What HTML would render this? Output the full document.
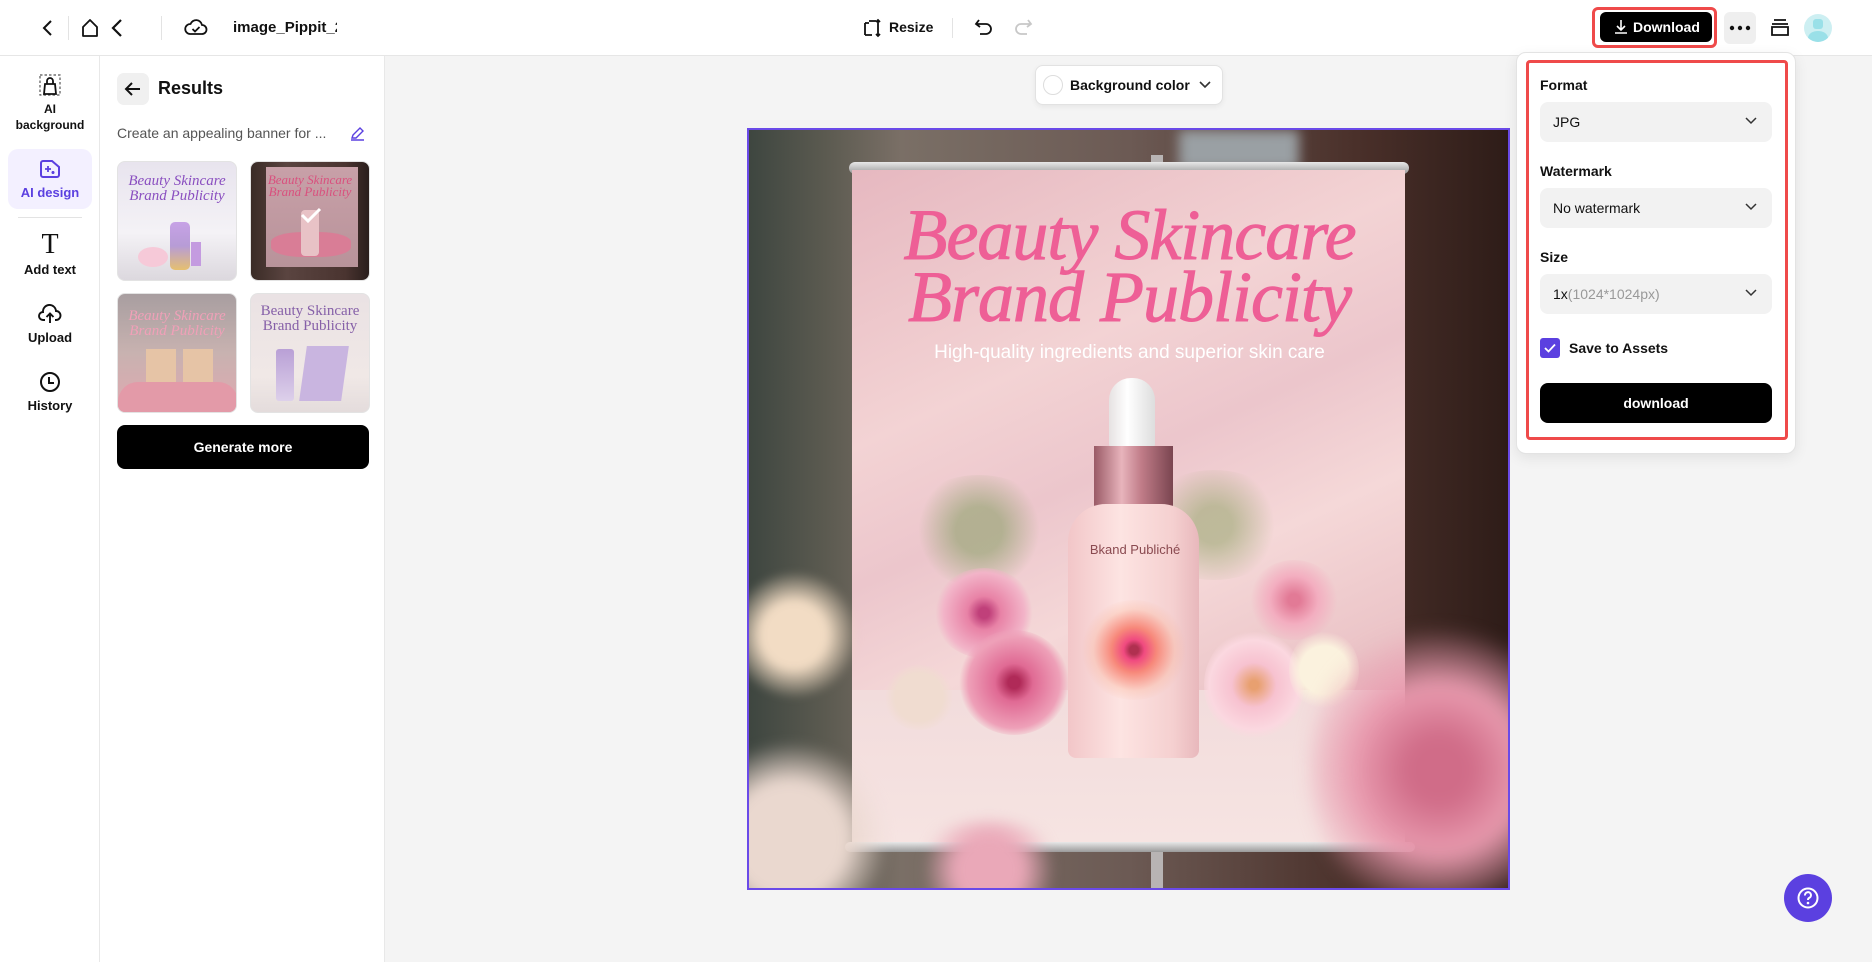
<!DOCTYPE html>
<html><head><meta charset="utf-8"><style>
*{box-sizing:border-box;margin:0;padding:0}
body{width:1872px;height:962px;overflow:hidden;background:#f4f4f4;font-family:"Liberation Sans",Arial,sans-serif;color:#111;position:relative}
.abs{position:absolute}
.top{left:0;top:0;width:1872px;height:56px;background:#fff;border-bottom:1px solid #e6e6e6}
.nav{left:0;top:56px;width:100px;height:906px;background:#fff;border-right:1px solid #e8e8e8}
.panel{left:100px;top:56px;width:285px;height:906px;background:#fff;border-right:1px solid #e8e8e8}
.navlbl{position:absolute;left:0;width:100px;text-align:center;font-size:12px;font-weight:bold;line-height:16px}
.thumb{position:absolute;width:120px;height:120px;border-radius:8px;overflow:hidden;border:1px solid #e3e3e3}
.thumb .t{position:absolute;left:0;width:100%;text-align:center;font-family:"Liberation Serif",serif;font-style:italic;font-size:15px;line-height:15px}
.sel{position:absolute;left:1540px;width:232px;height:40px;background:#f2f2f2;border-radius:8px;font-size:14px;padding-left:13px;line-height:40px}
.sel svg{position:absolute;right:14px;top:14px}
.lbl{position:absolute;left:1540px;font-size:14px;font-weight:bold}
</style></head><body>
<div class="abs top"></div>
<svg class="abs" style="left:40px;top:18px" width="16" height="20" viewBox="0 0 16 20"><path d="M11 3 L4 10 L11 17" fill="none" stroke="#111" stroke-width="2"/></svg>
<div class="abs" style="left:68px;top:16px;width:1px;height:24px;background:#e3e3e3"></div>
<svg class="abs" style="left:81px;top:18px" width="18" height="20" viewBox="0 0 18 20"><path d="M2 9 L9 2 L16 9 V18 H2 Z" fill="none" stroke="#111" stroke-width="1.8" stroke-linejoin="round"/></svg>
<svg class="abs" style="left:109px;top:17px" width="16" height="22" viewBox="0 0 16 22"><path d="M12 3 L4 11 L12 19" fill="none" stroke="#111" stroke-width="2.2"/></svg>
<div class="abs" style="left:161px;top:16px;width:1px;height:24px;background:#e3e3e3"></div>
<svg class="abs" style="left:184px;top:16px" width="24" height="22" viewBox="0 0 24 22"><path d="M6 18 H18 A4.5 4.5 0 0 0 18 9 A6 6 0 0 0 6.5 8 A5 5 0 0 0 6 18 Z" fill="none" stroke="#111" stroke-width="1.8"/><path d="M8.5 13 L11 15.5 L15.5 11" fill="none" stroke="#111" stroke-width="1.8"/></svg>
<div class="abs" style="left:233px;top:19px;width:104px;overflow:hidden;white-space:nowrap;font-size:15px;font-weight:bold">image_Pippit_2025</div>
<svg class="abs" style="left:863px;top:18px" width="20" height="20" viewBox="0 0 20 20"><path d="M2 17 V5 M2 17 H9 M2 5 H6 M15 2 V18 M13 4 L15 2 L17 4 M13 16 L15 18 L17 16 M6 3 H13" fill="none" stroke="#111" stroke-width="1.8"/></svg>
<div class="abs" style="left:889px;top:19px;font-size:14px;font-weight:bold">Resize</div>
<div class="abs" style="left:952px;top:18px;width:1px;height:20px;background:#e3e3e3"></div>
<svg class="abs" style="left:974px;top:17px" width="20" height="20" viewBox="0 0 20 20"><path d="M5 3 L2 7 L6 10 M2 7 H12 A5 5 0 0 1 12 17 H6" fill="none" stroke="#111" stroke-width="1.8"/></svg>
<svg class="abs" style="left:1013px;top:17px" width="20" height="20" viewBox="0 0 20 20"><path d="M15 3 L18 7 L14 10 M18 7 H8 A5 5 0 0 0 8 17 H14" fill="none" stroke="#c8c8c8" stroke-width="1.8"/></svg>
<div class="abs" style="left:1592px;top:7px;width:125px;height:41px;border:3px solid #ef4a4a;border-radius:6px"></div>
<div class="abs" style="left:1600px;top:12px;width:112px;height:30px;background:#000;border-radius:6px;color:#fff;font-size:14px;font-weight:bold;line-height:30px;padding-left:33px">Download</div>
<svg class="abs" style="left:1614px;top:19px" width="14" height="16" viewBox="0 0 14 16"><path d="M7 1 V11 M3 7 L7 11 L11 7 M1 14 H13" fill="none" stroke="#fff" stroke-width="1.6"/></svg>
<div class="abs" style="left:1724px;top:12px;width:32px;height:32px;background:#efefef;border-radius:6px"></div>
<svg class="abs" style="left:1729px;top:25px" width="22" height="6"><circle cx="3" cy="3" r="2.2" fill="#111"/><circle cx="11" cy="3" r="2.2" fill="#111"/><circle cx="19" cy="3" r="2.2" fill="#111"/></svg>
<svg class="abs" style="left:1770px;top:18px" width="20" height="20" viewBox="0 0 20 20"><path d="M4 2 H16 M2 6 H18 M2 9 H18 V17 H2 Z" fill="none" stroke="#111" stroke-width="1.8"/></svg>
<div class="abs" style="left:1804px;top:14px;width:28px;height:28px;border-radius:50%;background:#cdeff2;overflow:hidden"><div style="position:absolute;left:9px;top:5px;width:10px;height:10px;border-radius:3px;background:#9ae0e8"></div><div style="position:absolute;left:4px;top:17px;width:20px;height:14px;border-radius:50%;background:#9ae0e8"></div></div>

<div class="abs nav"></div>
<svg class="abs" style="left:39px;top:74px" width="22" height="22" viewBox="0 0 22 22"><rect x="1" y="1" width="20" height="20" fill="none" stroke="#555" stroke-width="1.2" stroke-dasharray="2.5 2"/><path d="M5 20 L6 10 H16 L17 20 Z M8 10 V7 A3 3 0 0 1 14 7 V10" fill="none" stroke="#111" stroke-width="1.8"/></svg>
<div class="navlbl" style="top:101px">AI<br>background</div>
<div class="abs" style="left:8px;top:149px;width:84px;height:60px;background:#f3f0ff;border-radius:10px"></div>
<svg class="abs" style="left:39px;top:159px" width="22" height="20" viewBox="0 0 22 20"><path d="M2 4 A2 2 0 0 1 4 2 H13 L20 8 V16 A2 2 0 0 1 18 18 H4 A2 2 0 0 1 2 16 Z" fill="none" stroke="#5b40e0" stroke-width="2"/><path d="M9 7 V13 M6 10 H12 M14 12 V15 M12.5 13.5 H15.5" stroke="#5b40e0" stroke-width="1.8"/></svg>
<div class="navlbl" style="top:185px;color:#5b40e0;font-size:13px">AI design</div>
<div class="abs" style="left:18px;top:217px;width:64px;height:1px;background:#e3e3e3"></div>
<div class="abs" style="left:0;top:230px;width:100px;text-align:center;font-family:'Liberation Serif',serif;font-size:28px;line-height:30px">T</div>
<div class="navlbl" style="top:262px;font-size:13px">Add text</div>
<svg class="abs" style="left:38px;top:303px" width="24" height="22" viewBox="0 0 24 22"><path d="M7 17 H5 A4 4 0 0 1 5 9 A6.5 6.5 0 0 1 18 8 A4.5 4.5 0 0 1 18 17 H17" fill="none" stroke="#111" stroke-width="1.9"/><path d="M12 20 V11 M8.5 14 L12 10.5 L15.5 14" fill="none" stroke="#111" stroke-width="1.9"/></svg>
<div class="navlbl" style="top:330px;font-size:13px">Upload</div>
<svg class="abs" style="left:39px;top:371px" width="22" height="22" viewBox="0 0 22 22"><circle cx="11" cy="11" r="9" fill="none" stroke="#111" stroke-width="2"/><path d="M10 6 V12 H15" fill="none" stroke="#111" stroke-width="2"/></svg>
<div class="navlbl" style="top:398px;font-size:13px">History</div>

<div class="abs panel"></div>
<div class="abs" style="left:117px;top:73px;width:32px;height:32px;background:#f0f0f0;border-radius:7px"></div>
<svg class="abs" style="left:124px;top:80px" width="18" height="18" viewBox="0 0 18 18"><path d="M16 9 H3 M8 3 L2 9 L8 15" fill="none" stroke="#111" stroke-width="2"/></svg>
<div class="abs" style="left:158px;top:78px;font-size:18px;font-weight:bold">Results</div>
<div class="abs" style="left:117px;top:125px;font-size:14px;color:#555">Create an appealing banner for ...</div>
<svg class="abs" style="left:350px;top:126px" width="15" height="15" viewBox="0 0 15 15"><path d="M2 12 L3 9 L10 2 L13 5 L6 12 Z M1 14 H14" fill="none" stroke="#5b40e0" stroke-width="1.4"/></svg>

<div class="thumb" style="left:117px;top:161px;background:linear-gradient(#e8e4ee,#f4f2f6 60%,#dcd8de)">
<div class="t" style="top:12px;color:#8a4fc0">Beauty Skincare<br>Brand Publicity</div>
<div style="position:absolute;left:52px;top:60px;width:20px;height:48px;border-radius:5px;background:linear-gradient(#c7a2e6,#b79cd6 50%,#e6c070)"></div>
<div style="position:absolute;left:20px;top:85px;width:30px;height:20px;border-radius:50%;background:#f6c9d8"></div>
<div style="position:absolute;left:73px;top:80px;width:10px;height:24px;background:#c49be0"></div></div>
<div class="thumb" style="left:250px;top:161px;background:linear-gradient(90deg,#3a2b26,#5a4440 30%,#4a3430 80%,#2a1e1c)">
<div style="position:absolute;left:15px;top:5px;width:92px;height:100px;background:linear-gradient(#c8a0a8,#b8939a)"></div>
<div class="t" style="top:12px;color:#d9507e;font-size:13px;line-height:12px">Beauty Skincare<br>Brand Publicity</div>
<div style="position:absolute;left:20px;top:70px;width:80px;height:25px;border-radius:40%;background:#d97d96"></div>
<div style="position:absolute;left:50px;top:48px;width:18px;height:46px;background:#e8c2c6;border-radius:4px"></div>
<svg style="position:absolute;left:48px;top:44px" width="24" height="18"><path d="M3 9 L9 15 L21 3" fill="none" stroke="#fff" stroke-width="3"/></svg></div>
<div class="thumb" style="left:117px;top:293px;background:linear-gradient(#a89ea0,#c8b2b0 50%,#e0a8b0)">
<div class="t" style="top:15px;color:#f0a0b8">Beauty Skincare<br>Brand Publicity</div>
<div style="position:absolute;left:28px;top:55px;width:30px;height:45px;background:#e6c4a6"></div>
<div style="position:absolute;left:65px;top:55px;width:30px;height:45px;background:#e6c4a6"></div>
<div style="position:absolute;left:0;top:88px;width:120px;height:32px;background:#e39aa8;border-radius:20px 20px 0 0"></div></div>
<div class="thumb" style="left:250px;top:293px;background:linear-gradient(#eae2e4,#f0e8e6 70%,#e4dcdc)">
<div class="t" style="top:10px;color:#8660a8;font-style:normal">Beauty Skincare<br>Brand Publicity</div>
<div style="position:absolute;left:25px;top:55px;width:18px;height:52px;border-radius:3px;background:linear-gradient(#b9a0d6,#ddd0ea)"></div>
<div style="position:absolute;left:52px;top:52px;width:42px;height:55px;background:#c9b5e0;transform:skew(-8deg)"></div></div>
<div class="abs" style="left:117px;top:425px;width:252px;height:44px;background:#000;border-radius:8px;color:#fff;text-align:center;line-height:44px;font-size:14px;font-weight:bold">Generate more</div>

<div class="abs" style="left:1035px;top:65px;width:188px;height:40px;background:#fff;border:1px solid #e2e2e2;border-radius:8px;box-shadow:0 2px 6px rgba(0,0,0,.06)"></div>
<div class="abs" style="left:1043px;top:75px;width:20px;height:20px;border-radius:50%;border:1px solid #ddd"></div>
<div class="abs" style="left:1070px;top:77px;font-size:14px;font-weight:bold">Background color</div>
<svg class="abs" style="left:1198px;top:80px" width="14" height="10"><path d="M2 2 L7 7 L12 2" fill="none" stroke="#333" stroke-width="1.6"/></svg>

<div class="abs" style="left:747px;top:128px;width:763px;height:762px;border:2px solid #6a4ae8;overflow:hidden;background:linear-gradient(90deg,#3e4640 0%,#5b5a50 10%,#7a6f66 20%,#6c5a54 50%,#4a302a 80%,#2e1c18 100%)">
 <div style="position:absolute;left:430px;top:0;width:120px;height:40px;background:#9aa0a4;filter:blur(6px)"></div>
 <div style="position:absolute;left:402px;top:25px;width:12px;height:740px;background:#b8b4b4"></div>
 <div style="position:absolute;left:100px;top:32px;width:560px;height:12px;border-radius:6px;background:linear-gradient(#e8e8e8,#9a9a9a)"></div>
 <div style="position:absolute;left:103px;top:40px;width:553px;height:675px;background:linear-gradient(155deg,#e6b8c0 0%,#f3d3d4 30%,#ecc6cc 45%,#f5d8d8 60%,#e9c0c4 80%,#f1d6d6 100%)"></div>
 <div style="position:absolute;left:103px;top:560px;width:553px;height:155px;background:linear-gradient(#f2dcdc,#f6e4e2)"></div>
 <div style="position:absolute;left:96px;top:712px;width:570px;height:10px;border-radius:5px;background:linear-gradient(#e8e8e8,#9a9a9a)"></div>
 <div style="position:absolute;left:0;top:74px;width:761px;text-align:center;font-family:'Liberation Serif',serif;font-style:italic;font-size:72px;line-height:62px;color:#ee5f96;letter-spacing:-1px;-webkit-text-stroke:1px #ee5f96">Beauty Skincare<br>Brand Publicity</div>
 <div style="position:absolute;left:0;top:212px;width:761px;text-align:center;font-size:19px;color:#fff">High-quality ingredients and superior skin care</div>
 <div style="position:absolute;left:155px;top:345px;width:150px;height:110px;border-radius:50%;background:radial-gradient(circle,rgba(122,154,88,.5) 0 25%,rgba(120,150,80,0) 65%)"></div>
 <div style="position:absolute;left:390px;top:340px;width:150px;height:110px;border-radius:50%;background:radial-gradient(circle,rgba(138,160,96,.5) 0 20%,rgba(120,150,80,0) 65%)"></div>
 <div style="position:absolute;left:185px;top:438px;width:100px;height:90px;border-radius:50%;background:radial-gradient(circle,#c0407a 0 8%,#e882a6 25%,#f2b4c8 60%,rgba(240,180,200,0) 72%)"></div>
 <div style="position:absolute;left:210px;top:500px;width:110px;height:105px;border-radius:50%;background:radial-gradient(circle,#b02a58 0 8%,#e06a94 25%,#eea0b8 60%,rgba(230,150,180,0) 72%)"></div>
 <div style="position:absolute;left:135px;top:535px;width:70px;height:65px;border-radius:50%;background:radial-gradient(circle,#f0dcd0 0 50%,rgba(240,220,210,0) 72%)"></div>
 <div style="position:absolute;left:455px;top:500px;width:100px;height:110px;border-radius:50%;background:radial-gradient(circle,#e8a070 0 6%,#f7c2d0 30%,#fbd8e0 60%,rgba(250,210,220,0) 72%)"></div>
 <div style="position:absolute;left:500px;top:430px;width:90px;height:80px;border-radius:50%;background:radial-gradient(circle,#e27a96 0 10%,#f3aec0 40%,rgba(240,170,190,0) 72%)"></div>
 <div style="position:absolute;left:540px;top:500px;width:70px;height:80px;border-radius:50%;background:radial-gradient(circle,#fbf2de 0 45%,rgba(250,240,220,0) 72%)"></div>
 <div style="position:absolute;left:360px;top:248px;width:46px;height:70px;border-radius:22px 22px 4px 4px;background:linear-gradient(90deg,#e6e2e2,#fff 40%,#ddd)"></div>
 <div style="position:absolute;left:345px;top:316px;width:79px;height:60px;background:linear-gradient(90deg,#9a5a66,#e8b4bc 35%,#c07c88 60%,#7a4550)"></div>
 <div style="position:absolute;left:319px;top:374px;width:131px;height:254px;border-radius:38px 38px 8px 8px;background:linear-gradient(90deg,#f2c6c8,#fde4e2 40%,#f5d0d0 80%,#e8b8bc)"></div>
 <div style="position:absolute;left:330px;top:412px;width:112px;text-align:center;font-size:13px;color:#8a4a50">Bkand Publiché</div>
 <div style="position:absolute;left:330px;top:470px;width:110px;height:100px;border-radius:50%;background:radial-gradient(circle,#b03050 0 6%,#f04a80 14%,#f7887a 30%,rgba(250,180,150,0.3) 55%,rgba(0,0,0,0) 70%)"></div>
 <div style="position:absolute;left:-60px;top:610px;width:200px;height:200px;border-radius:50%;background:radial-gradient(circle,#ead8cf 0 40%,rgba(230,210,200,0) 70%);filter:blur(6px)"></div>
 <div style="position:absolute;left:560px;top:480px;width:260px;height:320px;border-radius:50%;background:radial-gradient(circle,#d06c88 0 15%,#e89aae 40%,rgba(230,150,170,0) 70%);filter:blur(8px)"></div>
 <div style="position:absolute;left:-20px;top:440px;width:130px;height:130px;border-radius:50%;background:radial-gradient(circle,#f2dcc4 0 35%,rgba(240,220,200,0) 70%);filter:blur(4px)"></div>
 <div style="position:absolute;left:160px;top:690px;width:160px;height:100px;border-radius:50%;background:radial-gradient(circle,#eaa8b8 0 35%,rgba(230,160,180,0) 70%);filter:blur(6px)"></div>
</div>

<div class="abs" style="left:1516px;top:52px;width:280px;height:402px;background:#fff;border:1px solid #e3e3e3;border-radius:10px;box-shadow:0 4px 14px rgba(0,0,0,.08)"></div>
<div class="abs" style="left:1526px;top:60px;width:262px;height:380px;border:3px solid #ef4a4a;border-radius:4px"></div>
<div class="lbl" style="top:77px">Format</div>
<div class="sel" style="top:102px">JPG<svg width="14" height="10"><path d="M2 2 L7 7 L12 2" fill="none" stroke="#333" stroke-width="1.5"/></svg></div>
<div class="lbl" style="top:163px">Watermark</div>
<div class="sel" style="top:188px">No watermark<svg width="14" height="10"><path d="M2 2 L7 7 L12 2" fill="none" stroke="#333" stroke-width="1.5"/></svg></div>
<div class="lbl" style="top:249px">Size</div>
<div class="sel" style="top:274px">1x<span style="color:#999">(1024*1024px)</span><svg width="14" height="10"><path d="M2 2 L7 7 L12 2" fill="none" stroke="#333" stroke-width="1.5"/></svg></div>
<div class="abs" style="left:1540px;top:338px;width:20px;height:20px;background:#5b40e0;border-radius:3px"></div>
<svg class="abs" style="left:1543px;top:342px" width="14" height="12"><path d="M2 6 L5.5 9.5 L12 2.5" fill="none" stroke="#fff" stroke-width="1.8"/></svg>
<div class="abs" style="left:1569px;top:340px;font-size:14px;font-weight:bold">Save to Assets</div>
<div class="abs" style="left:1540px;top:383px;width:232px;height:40px;background:#000;border-radius:8px;color:#fff;font-size:14px;font-weight:bold;text-align:center;line-height:40px">download</div>

<div class="abs" style="left:1784px;top:874px;width:48px;height:48px;border-radius:50%;background:#5b40e0"></div>
<svg class="abs" style="left:1796px;top:886px" width="24" height="24" viewBox="0 0 24 24"><circle cx="12" cy="12" r="9.5" fill="none" stroke="#fff" stroke-width="2"/><path d="M9 9.5 A3 3 0 1 1 13 12 C12 12.5 12 13 12 14" fill="none" stroke="#fff" stroke-width="2"/><circle cx="12" cy="17" r="1.3" fill="#fff"/></svg>
</body></html>
